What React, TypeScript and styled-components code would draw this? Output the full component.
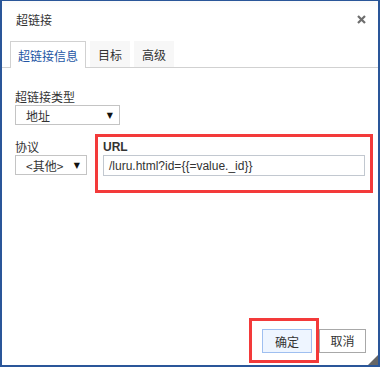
import React from "react";
import styled, { createGlobalStyle } from "styled-components";

const GlobalStyle = createGlobalStyle`
  html, body {
    margin: 0;
    padding: 0;
    background: #fff;
  }
  body {
    font-family: "Noto Sans CJK SC", "Liberation Sans", sans-serif;
    color: #333;
  }
`;

const Dialog = styled.div`
  position: relative;
  box-sizing: border-box;
  width: 380px;
  height: 367px;
  border: 2px solid #2a5699;
  border-top-width: 1px;
  background: #fff;
  display: flex;
  flex-direction: column;
`;

const TitleBar = styled.div`
  height: 36px;
  display: flex;
  align-items: center;
  justify-content: space-between;
  padding: 0 12px 0 14px;
  background: linear-gradient(#fafafa, #fff 20%);
`;

const Title = styled.span`
  font-size: 12px;
  color: #333;
`;

const CloseIcon = () => (
  <svg width="9" height="9" viewBox="0 0 9 9">
    <path d="M1 1 L8 8 M8 1 L1 8" stroke="#6e6e6e" strokeWidth="2.2" />
  </svg>
);

const TabBar = styled.div`
  display: flex;
  gap: 4px;
  align-items: flex-end;
  padding: 4px 0 0 8px;
  border-bottom: 1px solid #d1d1d1;
`;

const Tab = styled.div<{ $active?: boolean }>`
  box-sizing: border-box;
  padding: 0 7px;
  display: flex;
  align-items: center;
  font-size: 12px;
  color: ${(p) => (p.$active ? "#2456a4" : "#333")};
  background: ${(p) => (p.$active ? "#fff" : "#f7f7f7")};
  border: 1px solid ${(p) => (p.$active ? "#d1d1d1" : "transparent")};
  border-bottom: none;
  margin-bottom: ${(p) => (p.$active ? "-1px" : "0")};
  height: ${(p) => (p.$active ? "27px" : "26px")};
`;

const Body = styled.div`
  padding: 22px 0 0 13px;
  display: flex;
  flex-direction: column;
`;

const Label = styled.div<{ $bold?: boolean }>`
  height: 14px;
  font-size: 12px;
  line-height: 14px;
  color: #333;
  font-weight: ${(p) => (p.$bold ? "bold" : "normal")};
  font-family: ${(p) =>
    p.$bold ? '"Liberation Sans", Arial, sans-serif' : "inherit"};
  margin-bottom: 1px;
`;

const Select = styled.div<{ $width: number }>`
  box-sizing: border-box;
  width: ${(p) => p.$width}px;
  height: 20px;
  border: 1px solid #c4c4c4;
  display: flex;
  align-items: center;
  justify-content: space-between;
  padding: 0 6px 0 10px;
  font-size: 12px;
  color: #333;
`;

const Arrow = styled.span`
  font-family: "DejaVu Sans", sans-serif;
  font-size: 8px;
  color: #111;
`;

const Row = styled.div`
  display: flex;
  align-items: flex-start;
  margin-top: 9px;
`;

const Field = styled.div`
  display: flex;
  flex-direction: column;
`;

const ProtocolField = styled(Field)`
  margin-top: 6px;
  width: 80px;
`;

const Highlight = styled.div`
  border: 3px solid #f33a3a;
`;

const UrlBox = styled(Highlight)`
  box-sizing: border-box;
  width: 278px;
  padding: 3px 5px 14px 5px;
`;

const Input = styled.div`
  box-sizing: border-box;
  height: 21px;
  border: 1px solid #c2c8d0;
  padding: 0 5px;
  display: flex;
  align-items: center;
  font-family: "Liberation Sans", Arial, sans-serif;
  font-size: 12px;
  color: #333;
`;

const Footer = styled.div`
  margin-top: auto;
  display: flex;
  justify-content: flex-end;
  align-items: center;
  padding: 0 12px 2px 0;
`;

const OkBox = styled(Highlight)`
  padding: 8px 4px 7px 10px;
`;

const Button = styled.div<{ $primary?: boolean }>`
  box-sizing: border-box;
  height: 24px;
  width: ${(p) => (p.$primary ? "50px" : "47px")};
  display: flex;
  align-items: center;
  justify-content: center;
  font-size: 12px;
  color: #333;
  background: ${(p) => (p.$primary ? "#eef5ff" : "#fff")};
  border: 1px solid ${(p) => (p.$primary ? "#9fbff0" : "#a8a8a8")};
`;

const Grip = styled.div`
  position: absolute;
  right: 0;
  bottom: 0;
  width: 0;
  height: 0;
  border-left: 10px solid transparent;
  border-bottom: 10px solid #666;
`;

const App = () => {
  return (
    <>
      <GlobalStyle />
      <Dialog>
        <TitleBar>
          <Title>超链接</Title>
          <CloseIcon />
        </TitleBar>
        <TabBar>
          <Tab $active>超链接信息</Tab>
          <Tab>目标</Tab>
          <Tab>高级</Tab>
        </TabBar>
        <Body>
          <Field>
            <Label>超链接类型</Label>
            <Select $width={105}>
              地址<Arrow>▼</Arrow>
            </Select>
          </Field>
          <Row>
            <ProtocolField>
              <Label>协议</Label>
              <Select $width={72}>
                &lt;其他&gt;<Arrow>▼</Arrow>
              </Select>
            </ProtocolField>
            <UrlBox>
              <Label $bold>URL</Label>
              <Input>/luru.html?id={"{{=value._id}}"}</Input>
            </UrlBox>
          </Row>
        </Body>
        <Footer>
          <OkBox>
            <Button $primary>确定</Button>
          </OkBox>
          <Button>取消</Button>
        </Footer>
        <Grip />
      </Dialog>
    </>
  );
};

export default App;
